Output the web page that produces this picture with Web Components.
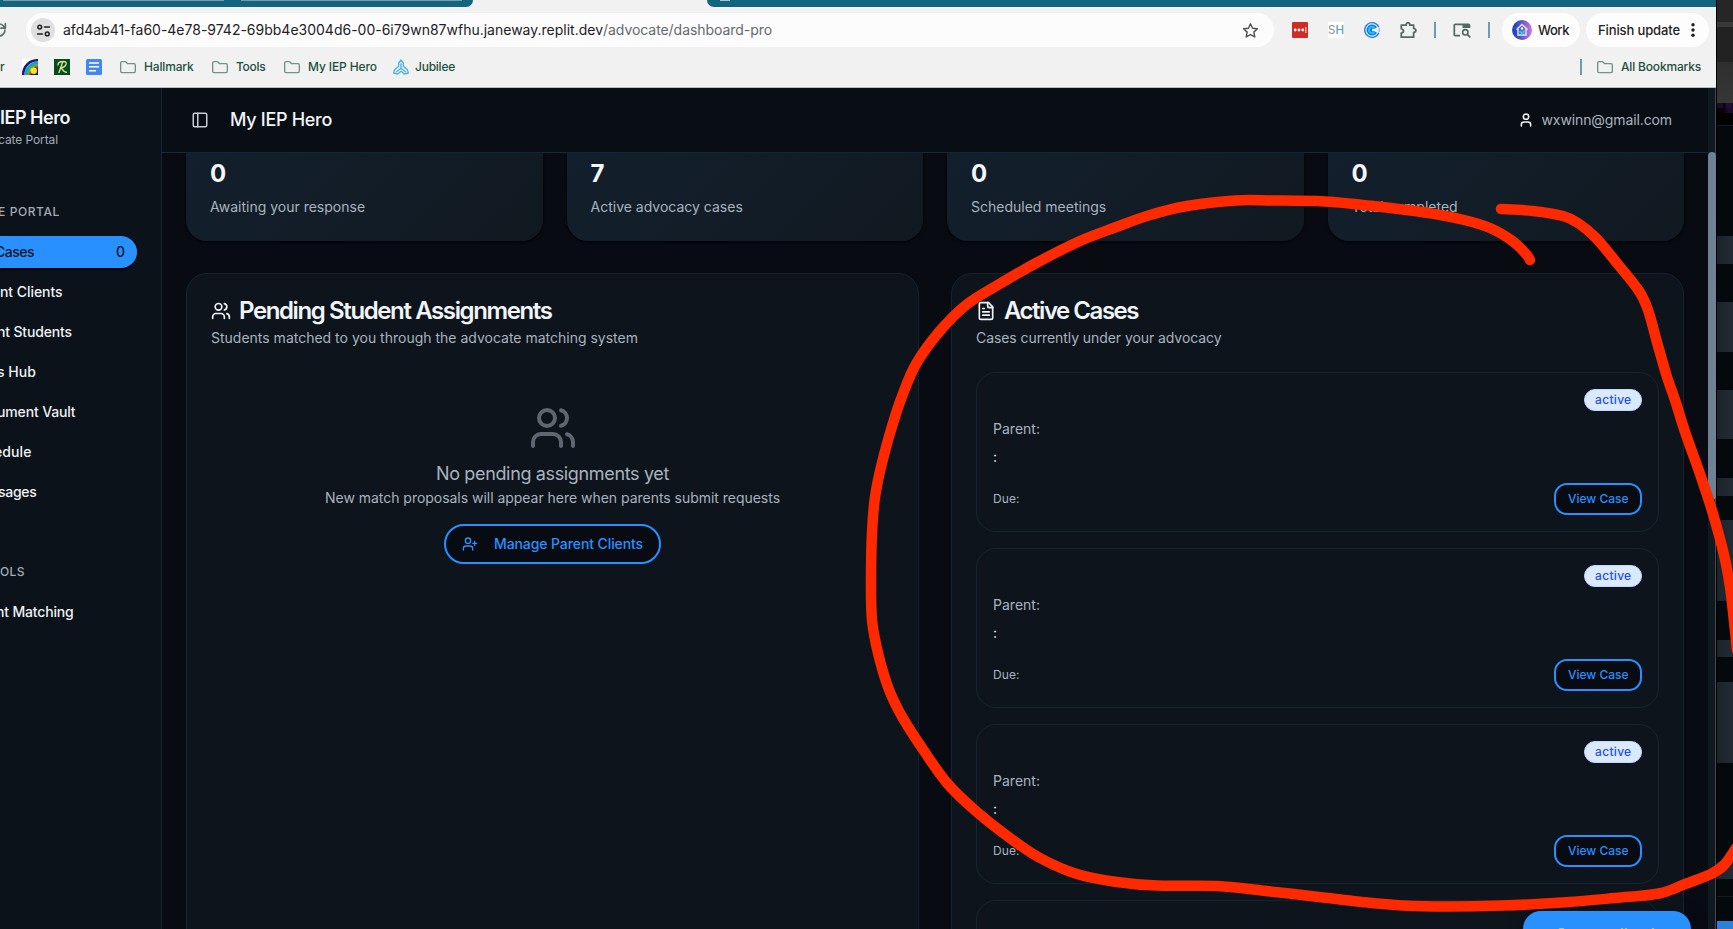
<!DOCTYPE html>
<html lang="en">
<head>
<meta charset="utf-8">
<title>My IEP Hero</title>
<style>
html,body{margin:0;height:100%;overflow:hidden;background:#04080c}
body{font-family:Inter,"Liberation Sans",sans-serif}
</style>
</head>
<body>
<app-screen></app-screen>
<script>
const labels = [];
function define(name, html, setup) {
  const tpl = document.createElement('template');
  tpl.innerHTML = html;
  customElements.define(name, class extends HTMLElement {
    connectedCallback() {
      if (this.shadowRoot) return;
      const root = this.attachShadow({ mode: 'open' });
      root.append(tpl.content.cloneNode(true));
      if (setup) setup(this, root);
    }
  });
}

/* A one-line label that tracks its letters out to a given width. */
define('ui-label', `<style>:host{display:block;flex:none;white-space:nowrap}span{display:inline-block}</style><span><slot></slot></span>`,
  (el, root) => { el.style.width = el.getAttribute('w') + 'px'; labels.push([el, root.querySelector('span')]); });

const ICONS = {
  users: '<path d="M16 21v-2a4 4 0 0 0-4-4H6a4 4 0 0 0-4 4v2"/><circle cx="9" cy="7" r="4"/><path d="M22 21v-2a4 4 0 0 0-3-3.87M16 3.13a4 4 0 0 1 0 7.75"/>',
  userplus: '<path d="M16 21v-2a4 4 0 0 0-4-4H6a4 4 0 0 0-4 4v2"/><circle cx="9" cy="7" r="4"/><path d="M19 8v6M22 11h-6"/>',
  user: '<path d="M19 21v-2a4 4 0 0 0-4-4H9a4 4 0 0 0-4 4v2"/><circle cx="12" cy="7" r="4"/>',
  file: '<path d="M15 2H6a2 2 0 0 0-2 2v16a2 2 0 0 0 2 2h12a2 2 0 0 0 2-2V7Z"/><path d="M14 2v4a2 2 0 0 0 2 2h4M10 9H8M16 13H8M16 17H8"/>',
  panel: '<rect x="3" y="3" width="18" height="18" rx="2"/><path d="M9 3v18"/>',
  folder: '<path d="M1 6q0-2 2-2h5.500l3 3h9.500q2 0 2 2v9.500q0 2-2 2h-18q-2 0-2-2z"/>',
  star: '<path d="M12 2.500l2.900 6.300 6.900.8-5.100 4.700 1.400 6.800-6.100-3.400-6.100 3.400 1.400-6.800-5.100-4.700 6.900-.8z"/>',
  reload: '<path d="M20 12a8 8 0 1 1-2.300-5.700L20 9M20.500 3.500V9.500H14.500"/>',
  tune: '<circle cx="6" cy="6.500" r="3"/><path d="M13.500 6.500h8M2.500 17.500h8"/><circle cx="18" cy="17.500" r="3"/>',
  puzzle: '<path d="M3 5.500h6.500q0-3 2.500-3t2.500 3H19.500V10q3 0 3 2.500t-3 2.500v6.500H3V16q3-.5 3-2.800T3 10.300z"/>',
  jubilee: '<path d="M12 1.500l3.500 4.500v5l6 5 1.500 5-6 1.500-5-4-5 4-6-1.500 1.500-5 6-5v-5zM12 7v7M12 14l-6.500 5M12 14l6.500 5"/>'
};
define('ui-icon', `<style>:host{display:block;flex:none;line-height:0}svg{display:block;fill:none;stroke:currentColor;stroke-linecap:round;stroke-linejoin:round}</style><svg viewBox="0 0 24 24"></svg>`,
  (el, root) => {
    const svg = root.querySelector('svg'), s = el.getAttribute('size') || 16;
    svg.setAttribute('width', s); svg.setAttribute('height', s);
    svg.setAttribute('stroke-width', el.getAttribute('stroke') || 2);
    svg.innerHTML = ICONS[el.getAttribute('name')];
  });

define('tab-strip', `<style>
:host{display:flex;height:7px;background:#f1f1f1;overflow:hidden}
.a{width:473px;background:#13647e;border-radius:0 0 8px 0;display:flex;gap:17px}
.a i{height:1px;background:#7a9ba6;width:221px;margin-left:3px}.a i+i{margin-left:0}
.b{margin-left:234px;flex:1;background:#13647e;border-radius:0 0 0 8px}
.b i{display:block;width:10px;height:1px;margin-left:13px;background:#a9c3cc}
</style><div class="a"><i></i><i></i></div><div class="b"><i></i></div>`);

define('tool-bar', `<style>
:host{display:flex;height:46px;align-items:center;background:#f1f1f1;color:#1f2124;font-size:14px}
ui-label{padding-bottom:1px}
.re{margin-left:-10px;color:#5b6f68}
.url{box-sizing:border-box;width:1248px;height:34px;margin-left:18px;border-radius:17px;background:#fcfcfc;display:flex;align-items:center;padding-left:5px;color:#1f2124}
.tune{width:24px;height:24px;border-radius:12px;background:#dfdfdf;display:grid;place-items:center;margin-right:8px}
.path{color:#66696d}.star{margin-left:470px;color:#505457}
.dots{margin-left:18px}
.sh{width:16px;height:16px;background:#fff;margin-left:20px;font-size:11.500px;line-height:17px;color:#8b8f92;display:flex}
.sh b{font-weight:500;color:#5b9acb}
.c{margin-left:20px}.pz{margin-left:19px;color:#52695f}
.bar{width:2px;height:16px;background:#6f9bab}
.pill{height:34px;border-radius:17px;background:#fdfdfd;display:flex;align-items:center;font-size:13px;font-weight:450}
svg{display:block;flex:none}
</style>
<ui-icon class="re" name="reload" size="18" stroke="2.200"></ui-icon>
<div class="url"><div class="tune"><ui-icon name="tune" size="15" stroke="2.400"></ui-icon></div>
<ui-label w="540">afd4ab41-fa60-4e78-9742-69bb4e3004d6-00-6i79wn87wfhu.janeway.replit.dev</ui-label><ui-label class="path" w="169">/advocate/dashboard-pro</ui-label>
<ui-icon class="star" name="star" size="17"></ui-icon></div>
<svg class="dots" width="16" height="16" viewBox="0 0 16 16"><rect width="16" height="16" rx="1" fill="#d12b26"/><g fill="#fff"><circle cx="3.200" cy="8" r="1.400"/><circle cx="7" cy="8" r="1.400"/><circle cx="10.800" cy="8" r="1.400"/><rect x="13.300" y="5" width="1" height="6"/></g></svg>
<div class="sh"><ui-label w="16">S<b>H</b></ui-label></div>
<svg class="c" width="16" height="16" viewBox="0 0 16 16"><path d="M14.800 5.300a7.300 7.300 0 1 0 0 5.400" fill="none" stroke="#1b7af2" stroke-width="1.300"/><path d="M13 5.300a5.600 5.600 0 1 0 0 5.400L10.500 9.300H8V6.700h2.500z" fill="#1273f3"/><path d="M10.600 6a3.200 3.200 0 1 0 0 4" fill="none" stroke="#12c9f5" stroke-width="2"/><path d="M15.200 6.300v3.400" stroke="#6aa9f5" stroke-width="1.200"/></svg>
<ui-icon class="pz" name="puzzle" size="18" stroke="2.300"></ui-icon>
<i class="bar" style="margin-left:17px"></i>
<svg style="margin-left:17px" width="18" height="16" viewBox="0 0 18 16"><path d="M7 13.700H2.300q-1 0-1-1V3.300q0-1 1-1H15.500q1 0 1 1V6" fill="none" stroke="#52695f" stroke-width="1.700"/><path d="M9.500 2h7.500v4h-7.500z" fill="#52695f"/><circle cx="12.300" cy="10.300" r="2.700" fill="none" stroke="#52695f" stroke-width="1.600"/><path d="M14.300 12.300l3 3" stroke="#52695f" stroke-width="1.700"/></svg>
<i class="bar" style="margin-left:17px"></i>
<div class="pill" style="width:68px;margin-left:12px;padding-left:10px">
<svg width="20" height="20" viewBox="0 0 20 20"><defs><linearGradient id="g"><stop offset="0.150" stop-color="#2149b8"/><stop offset="1" stop-color="#cd75e3"/></linearGradient></defs><circle cx="10" cy="10" r="10" fill="url(#g)"/><path d="M4.500 9.500L10 4.500l5.500 5M6 9v6h8V9" fill="none" stroke="#e9e6ff" stroke-width="1.400"/><circle cx="10" cy="8.500" r="1.200" fill="#fff"/><path d="M7.500 11l2.500 2.500L13 10.500" fill="none" stroke="#26c6f0" stroke-width="2"/></svg>
<ui-label w="31" style="margin-left:6px">Work</ui-label></div>
<div class="pill" style="width:111px;margin-left:6px;padding-left:12px"><ui-label w="82">Finish update</ui-label>
<svg style="margin-left:11px" width="4" height="16" viewBox="0 0 4 16"><g fill="#1f2124"><circle cx="2" cy="2.800" r="1.700"/><circle cx="2" cy="8" r="1.700"/><circle cx="2" cy="13.300" r="1.700"/></g></svg></div>`);

define('bookmark-bar', `<style>
:host{display:flex;box-sizing:border-box;height:35px;align-items:center;padding-bottom:7px;background:#f1f1f1;border-bottom:1px solid #b9bbbb;color:#1d4f40;font-size:12px;font-weight:450}
ui-icon{color:#6f9285}svg{display:block;flex:none}
.end{margin-left:auto;display:flex;align-items:center;padding-right:15px}
.bar{width:2px;height:16px;background:#6f9bab;margin-right:15px}
</style>
<ui-label w="4.500">r</ui-label>
<svg style="margin-left:17.500px" width="16" height="16" viewBox="0 0 16 16"><rect width="16" height="16" fill="#fff"/><g fill="none" stroke-width="2.600"><path d="M1.300 16A14 14 0 0 1 16 1.300" stroke="#171a7c"/><path d="M3.700 16A12 12 0 0 1 16 3.900" stroke="#1898dd"/><path d="M5.900 16A10 10 0 0 1 16 6" stroke="#3cb64a"/></g><path d="M7 16A9 9 0 0 1 16 7V16z" fill="#d91f26"/><path d="M9 16q0-6 7-6.500V16z" fill="#17196b"/><circle cx="11.700" cy="11.700" r="3.300" fill="#ffe512"/></svg>
<svg style="margin-left:16px" width="16" height="16" viewBox="0 0 16 16"><rect width="16" height="16" fill="#064a1e"/><path d="M4 6q0-3.500 5-3.500t2.500 4q-1.500 2-4 2.200 1.500 4 5 4.500M8.500 3.500L5 13.500" fill="none" stroke="#cfe38a" stroke-width="1.400" stroke-linecap="round"/></svg>
<svg style="margin-left:16px" width="16" height="16" viewBox="0 0 16 16"><rect width="16" height="16" rx="1.500" fill="#4285f4"/><path d="M3 4h10M3 7.800h10M3 11.700h7" stroke="#fff" stroke-width="1.500"/></svg>
<ui-icon name="folder" style="margin-left:18px"></ui-icon><ui-label w="49.500" style="margin-left:8px">Hallmark</ui-label>
<ui-icon name="folder" style="margin-left:18.500px"></ui-icon><ui-label w="29.500" style="margin-left:8px">Tools</ui-label>
<ui-icon name="folder" style="margin-left:18.500px"></ui-icon><ui-label w="69" style="margin-left:8px">My IEP Hero</ui-label>
<ui-icon name="jubilee" style="margin-left:16px;color:#4bb0e6"></ui-icon><ui-label w="40" style="margin-left:6px">Jubilee</ui-label>
<div class="end"><i class="bar"></i><ui-icon name="folder"></ui-icon><ui-label w="80" style="margin-left:8px">All Bookmarks</ui-label></div>`);

define('side-item', `<style>:host{display:flex;align-items:center;box-sizing:border-box;height:32px;padding-bottom:1px;margin:0 24px 8px 0;font-size:14px;font-weight:450;color:#eef1f5}
:host([active]){background:#2990ff;color:#0a1524;border-radius:0 16px 16px 0;box-shadow:0 1px 3px #000}
:host([group]){font-size:12px;font-weight:500;color:#a2abb7;margin-bottom:8px;padding-bottom:2px}
.n{margin-left:auto;padding-right:12px}</style>
<ui-label></ui-label><span class="n"><slot></slot></span>`,
  (el, root) => {
    const l = root.querySelector('ui-label');
    l.textContent = el.getAttribute('text'); l.style.width = el.getAttribute('w') + 'px';
    l.setAttribute('w', el.getAttribute('w'));
    l.style.marginLeft = el.getAttribute('x') + 'px';
  });

define('side-nav', `<style>
:host{display:block;box-sizing:border-box;width:162px;flex:none;background:#0b1219;border-right:1px solid #162634;overflow:hidden;padding-top:16px}
.t{font-size:18px;font-weight:600;line-height:28px;color:#f1f4f8}.s{font-size:12px;line-height:16px;color:#a2abb7;margin:0 0 48px -2px}
</style>
<ui-label class="t" w="70">IEP Hero</ui-label><ui-label class="s" w="60">cate Portal</ui-label>
<side-item group text="E PORTAL" x="-2" w="62"></side-item>
<side-item active text="Cases" x="-5" w="39">0</side-item>
<side-item text="nt Clients" x="0" w="62.500"></side-item>
<side-item text="nt Students" x="-3" w="75"></side-item>
<side-item text="s Hub" x="-3" w="39"></side-item>
<side-item text="ument Vault" x="-3" w="78.500"></side-item>
<side-item text="edule" x="-6" w="37.500"></side-item>
<side-item text="sages" x="-2" w="38.500" style="margin-bottom:48px"></side-item>
<side-item group text="OLS" x="0" w="25"></side-item>
<side-item text="nt Matching" x="-4" w="77.500"></side-item>`);

define('page-header', `<style>
:host{display:flex;box-sizing:border-box;height:65px;align-items:center;padding:0 36px 0 29px;border-bottom:1px solid #172a3b;background:#090e15;color:#f1f4f8}
.h{font-size:18px;font-weight:550;margin-left:21px}.m{margin-left:auto;display:flex;align-items:center;gap:8px;font-size:14px}.m ui-label{color:#a9b3bf}
ui-label{padding-bottom:1px}
</style><ui-icon name="panel" size="18" style="color:#c7ccd2"></ui-icon><ui-label class="h" w="102">My IEP Hero</ui-label>
<div class="m"><ui-icon name="user" size="16" stroke="2.300"></ui-icon><ui-label w="130.500">wxwinn@gmail.com</ui-label></div>`);

define('stat-card', `<style>
:host{display:block;flex:1;box-sizing:border-box;height:88px;padding:5px 24px 0;border-radius:0 0 21px 21px;background:linear-gradient(135deg,#121f2c,#121d28 45%,#111920);box-shadow:0 1px 3px #000}
.n{font-size:24px;font-weight:700;line-height:32px;color:#f4f6f9}.l{font-size:14px;line-height:20px;color:#a9b3bf;margin-top:7px}
</style><div class="n"></div><ui-label class="l"><slot></slot></ui-label>`,
  (el, root) => {
    root.querySelector('.n').textContent = el.getAttribute('n');
    const l = root.querySelector('.l'); l.setAttribute('w', el.getAttribute('w')); l.style.width = el.getAttribute('w') + 'px';
  });

define('panel-card', `<style>
:host{display:block;flex:1;box-sizing:border-box;height:720px;border:1px solid #162432;border-radius:21px;background:#0d141c;padding:24px}
.t{display:flex;align-items:center;height:26px;gap:8px;font-size:24px;font-weight:600;color:#f1f4f8}
.h{padding-bottom:1px}
.s{font-size:14px;line-height:20px;color:#a9b3bf;margin-top:4px}
</style><div class="t"><ui-icon size="20"></ui-icon><ui-label class="h"></ui-label></div><ui-label class="s"></ui-label><slot></slot>`,
  (el, root) => {
    root.querySelector('ui-icon').replaceWith(Object.assign(document.createElement('div'), { innerHTML: `<ui-icon size="20" name="${el.getAttribute('icon')}"></ui-icon>` }));
    [['.h', 'h', 'hw'], ['.s', 's', 'sw']].forEach(([q, t, w]) => {
      const l = root.querySelector(q); l.textContent = el.getAttribute(t);
      l.setAttribute('w', el.getAttribute(w)); l.style.width = el.getAttribute(w) + 'px';
    });
  });

define('outline-button', `<style>:host{display:flex;flex:none;box-sizing:border-box;align-items:center;border:2px solid #2990ff;background:#080c12;color:#2990ff;font-weight:450}</style><slot></slot>`);

define('empty-state', `<style>
:host{display:flex;flex-direction:column;align-items:center;margin-top:56px;color:#a9b3bf}
.i{color:#5f6670}.a{font-size:18px;line-height:28px;margin-top:8px}.b{font-size:14px;line-height:20px}
outline-button{width:217px;height:40px;border-radius:20px;margin-top:16px;padding-left:16px;font-size:14px;gap:16px}
outline-button ui-label{padding-bottom:1px}
</style><ui-icon class="i" name="users" size="48"></ui-icon><ui-label class="a" w="233">No pending assignments yet</ui-label><ui-label class="b" w="455">New match proposals will appear here when parents submit requests</ui-label>
<outline-button><ui-icon name="userplus"></ui-icon><ui-label w="149">Manage Parent Clients</ui-label></outline-button>`);

define('case-card', `<style>
:host{display:block;box-sizing:border-box;height:160px;border:1px solid #162432;border-radius:20px;padding:16px;margin-bottom:16px;color:#a9b3bf;font-size:14px;line-height:20px}
.g{box-sizing:border-box;margin-left:auto;width:58px;height:22px;border:1px solid #bfd9fd;border-radius:11px;background:#dbe9fe;color:#2350dc;font-size:12px;font-weight:500;padding-left:10px}
.p{margin-top:8px}.c{margin-top:8px;color:#f1f4f8}.f{display:flex;align-items:center;justify-content:space-between;height:32px;margin-top:16px;font-size:12px}
outline-button{width:88px;height:32px;border-radius:13px;padding-left:12px;font-size:12px}
</style><div class="g"><ui-label w="36.500">active</ui-label></div><ui-label class="p" w="47">Parent:</ui-label><div class="c">:</div>
<div class="f"><ui-label w="26.500">Due:</ui-label><outline-button><ui-label w="60.500">View Case</ui-label></outline-button></div>`);

define('dashboard-view', `<style>
:host{display:block;flex:1;min-width:0;overflow:hidden;background:#080c12}
.stats{display:flex;gap:24px;padding:0 24px}.panels{display:flex;gap:32px;padding:32px 24px 0}
.list{margin-top:24px}
</style><page-header></page-header>
<div class="stats"><stat-card n="0" w="153.500">Awaiting your response</stat-card><stat-card n="7" w="150">Active advocacy cases</stat-card><stat-card n="0" w="135">Scheduled meetings</stat-card><stat-card n="0" w="106">Total completed</stat-card></div>
<div class="panels"><panel-card icon="users" h="Pending Student Assignments" hw="312.500" s="Students matched to you through the advocate matching system" sw="427"><empty-state></empty-state></panel-card>
<panel-card icon="file" h="Active Cases" hw="134" s="Cases currently under your advocacy" sw="245.500"><div class="list"><case-card></case-card><case-card></case-card><case-card></case-card><case-card></case-card></div></panel-card></div>`);

define('scroll-bar', `<style>:host{display:block;box-sizing:border-box;width:8px;flex:none;background:#101922;border-right:1px solid #454b51;padding-top:64px}
i{display:block;height:348px;width:8px;border-radius:4px;background:#6f8195;margin-right:-1px}</style><i></i>`);

define('behind-window', `<style>:host{display:flex;flex-direction:column;width:16px;flex:none;border-left:1px solid #000;background:#04090d}i{display:block;flex:none}</style>`,
  (el, root) => {
    const d = '#04090d', b = 'linear-gradient(90deg,#1b232b,#222a33)';
    [[22, '#262626'], [5, '#393939'], [35, '#222'], [41, 'linear-gradient(#2e2e2e,#373737)'], [5, 'linear-gradient(90deg,#1c0b2b 0 30%,#050308 45%,#220d36 60% 90%,#050308)'], [5, 'linear-gradient(90deg,#050308 40%,#1c0b2b 70%)'], [12, '#020203'], [1, '#131d26'], [110, d], [28, b], [38, d], [50, b], [38, d], [49, b], [39, d], [18, b], [24, d], [81, b], [39, d], [17, b], [25, d], [81, b], [99, d], [17, b], [17, d], [1, '#131d26'], [24, d], [8, '#2d7fdc']]
      .forEach(([h, c]) => { const i = document.createElement('i'); i.style.height = h + 'px'; i.style.background = c; root.append(i); });
  });

/* Hand-drawn marker strokes smoothed through their points. */
define('marker-ink', `<style>:host{display:block;position:absolute;inset:0;pointer-events:none}svg{display:block}</style><svg width="1733" height="929" fill="none" stroke="#ff2900" stroke-width="10.500" stroke-linecap="round" stroke-linejoin="round"></svg>`,
  (el, root) => {
    const strokes = [
      [[1530,260],[1526,254],[1512.5,241],[1490,228],[1462,219.5],[1425,212.500],[1373,206],[1325,201.500],[1273,200.500],[1235.5,200.500],[1187,206],[1150,215],[1115,227.500],[1080,241],[1038,262],[996,286],[966,305],[939,332],[916,364],[902.5,395],[892.7,424],[881.7,464],[875,497],[872,533],[871,580],[872,620],[878,653],[888,687],[900,713],[918,742],[947,783],[977,812],[1010,838],[1040,858],[1077,874],[1117,882],[1157,885.6],[1217,886],[1261.5,890.500],[1317,896.7],[1362,902],[1403,905.6],[1447.5,906.6],[1503,905.6],[1566,902.3],[1615,898],[1659,893.5],[1685,884],[1711,874],[1724,865],[1736,848]],
      [[1501,209],[1533,211],[1563,216],[1578,223],[1596,238],[1618.5,265],[1639,291],[1648,310],[1657.5,344],[1667,377],[1675,400],[1685.4,433],[1700,474],[1713,514],[1724.5,557],[1730,587],[1733,612],[1737,650]]
    ];
    root.querySelector('svg').innerHTML = strokes.map(p => {
      let d = `M${p[0]}`;
      for (let i = 0; i < p.length - 1; i++) {
        const a = p[i - 1] || p[i], b = p[i], c = p[i + 1], e = p[i + 2] || c;
        d += `C${b[0] + (c[0] - a[0]) / 6} ${b[1] + (c[1] - a[1]) / 6} ${c[0] - (e[0] - b[0]) / 6} ${c[1] - (e[1] - b[1]) / 6} ${c}`;
      }
      return `<path d="${d}"/>`;
    }).join('');
  });

define('float-button', `<style>:host{display:block;position:absolute;left:1523px;top:911px;width:168px;height:18px;border-radius:22px 22px 0 0;background:#2990ff;box-shadow:0 4px 16px rgba(0,0,0,.5)}
svg{display:block}</style><svg width="167" height="18"><path d="M36 17.500h5M98 17.500h2M102 17.500h2M129 17.500h2" stroke="#8cc3ff"/></svg>`);

define('app-screen', `<style>
:host{display:flex;position:relative;width:1733px;height:929px;overflow:hidden}
.win{width:1716px;flex:none;display:flex;flex-direction:column}.body{display:flex;flex:1;min-height:0}
</style><div class="win"><tab-strip></tab-strip><tool-bar></tool-bar><bookmark-bar></bookmark-bar>
<div class="body"><side-nav></side-nav><dashboard-view></dashboard-view><scroll-bar></scroll-bar></div></div>
<behind-window></behind-window><float-button></float-button><marker-ink></marker-ink>`);

labels.forEach(([el, span]) => {
  const n = el.textContent.length, w = parseFloat(el.getAttribute('w'));
  if (n && w) span.style.letterSpacing = (w - span.getBoundingClientRect().width) / n + 'px';
});
</script>
</body>
</html>
